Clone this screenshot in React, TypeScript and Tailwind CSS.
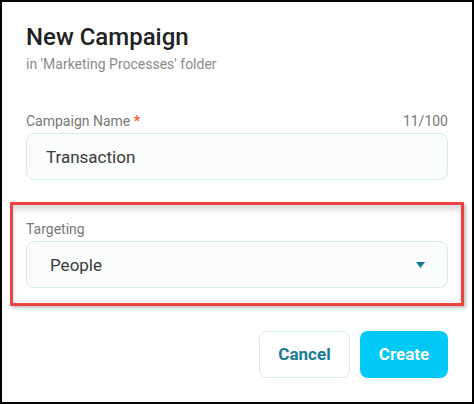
export default function App() {
  return (
    <div
      className="w-[474px] h-[404px] bg-white border-2 border-black box-border px-6 pt-[21px]"
      style={{ fontFamily: "Roboto, 'Liberation Sans', sans-serif" }}
    >
      <h1 className="text-[24px] leading-[28px] font-medium text-[#222]">New Campaign</h1>
      <p className="mt-[4px] text-[14px] leading-[18px] text-[#8a8a8a]">in 'Marketing Processes' folder</p>

      {/* Campaign name */}
      <div className="mt-[38px]">
        <div className="flex items-center justify-between text-[14px] leading-[20px] text-[#777]">
          <span>
            Campaign Name <span className="text-[#f05a22] font-bold">*</span>
          </span>
          <span>11/100</span>
        </div>
        <div className="mt-[2px] h-[47px] flex items-center rounded-lg border border-[#d5ecef] bg-[#fbfcfc] pl-[19px]">
          <span className="text-[17px] leading-[20px] text-[#3a3a3a]">Transaction</span>
        </div>
      </div>

      {/* Targeting, highlighted */}
      <div className="mt-[22px] -mx-[16px] border-[3px] border-[#ec4141] px-[13px] pt-[14px] pb-[15px] shadow-[inset_0_5px_5px_rgba(0,0,0,0.14),2px_2px_3px_rgba(0,0,0,0.25)]">
        <div className="text-[14px] leading-[20px] text-[#777]">Targeting</div>
        <div className="mt-[2px] h-[47px] flex items-center justify-between rounded-lg border border-[#d5ecef] bg-[#fbfcfc] pl-[23px] pr-[22px]">
          <span className="text-[17px] leading-[20px] text-[#3a3a3a]">People</span>
          <svg width="9" height="6" viewBox="0 0 9 6">
            <polygon points="0,0 9,0 4.5,6" fill="#0f7b98" />
          </svg>
        </div>
      </div>

      {/* Actions */}
      <div className="mt-[25px] flex justify-end gap-[10px]">
        <button className="w-[91px] h-[47px] rounded-lg border border-[#d5ecef] bg-white text-[17px] font-bold text-[#167a95]">
          Cancel
        </button>
        <button className="w-[88px] h-[47px] rounded-lg bg-[#00c9f7] text-[17px] font-bold text-white">
          Create
        </button>
      </div>
    </div>
  );
}
